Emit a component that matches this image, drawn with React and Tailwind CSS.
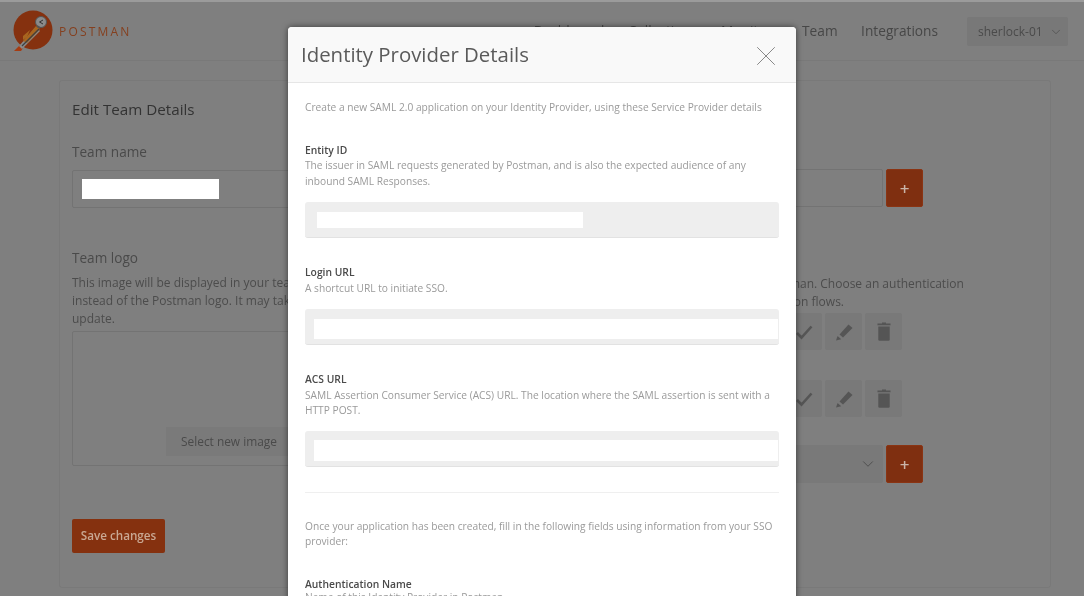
import React from "react";
import { ChevronDown, X } from "lucide-react";

const font = { fontFamily: '"Open Sans", sans-serif' };

function Logo() {
  return (
    <svg width="42" height="44" viewBox="0 0 42 44" className="shrink-0">
      <circle cx="21" cy="20" r="19.5" fill="#85310f" />
      <path d="M2 41 L8 35 L11 38 L9 41 Z" fill="#a63c12" />
      <path d="M7 36 L24 17 L28 21 L10 39 Z" fill="#8a8a8a" />
      <path d="M11 31 L24 16 L28 19 L15 33 Z" fill="#a8651f" />
      <path d="M11 26 L18 20 L15 27 L11 30 Z" fill="#a8651f" />
      <path d="M10 36 L27 19" stroke="#3f3f3f" strokeWidth="1.2" />
      <circle cx="29" cy="12" r="5.5" fill="#8b8b8b" stroke="#555" strokeWidth="1" />
      <path d="M31 10 L27.5 12 L31 14" stroke="#333" strokeWidth="1" fill="none" />
      <path d="M25 16 L28 18" stroke="#555" strokeWidth="2" />
    </svg>
  );
}

function IconBtn({ children }) {
  return (
    <div className="w-[37px] h-[37px] rounded-[2px] bg-[#797979] flex items-center justify-center text-[#555555]">
      {children}
    </div>
  );
}

function CheckIcon() {
  return (
    <svg width="20" height="20" viewBox="0 0 20 20" fill="none">
      <path d="M3 11 L7.5 15.5 L17.5 4.5" stroke="currentColor" strokeWidth="2.6" />
    </svg>
  );
}

function PencilIcon() {
  return (
    <svg width="20" height="20" viewBox="0 0 20 20" fill="currentColor">
      <path d="M5.5 12.5 L14.5 2.5 L18.5 6 L9 15.5 Z" />
      <path d="M2 18.5 L3.6 14 L7.2 17.2 Z" />
    </svg>
  );
}

function TrashIcon() {
  return (
    <svg width="14" height="19" viewBox="0 0 14 19" fill="currentColor">
      <path d="M5 0.5 H9 V1.6 H13.5 V3.2 H0.5 V1.6 H5 Z" />
      <path d="M1.3 4.6 H12.7 V17.5 Q12.7 18.7 11.5 18.7 H2.5 Q1.3 18.7 1.3 17.5 Z" />
    </svg>
  );
}

function Actions({ className }) {
  return (
    <div className={"flex justify-end gap-[3px] w-[370px] " + className}>
      <IconBtn><CheckIcon /></IconBtn>
      <IconBtn><PencilIcon /></IconBtn>
      <IconBtn><TrashIcon /></IconBtn>
    </div>
  );
}

function Plus() {
  return (
    <div className="w-[37px] h-[38px] rounded-[2px] bg-[#7f2f10] border border-[#8a3413] flex items-center justify-center text-[#c9b4a8] text-[17px] font-semibold leading-none">
      +
    </div>
  );
}

function Field({ label, children, className }) {
  return (
    <div className={className}>
      <div className="text-[10.3px] leading-[15.5px] font-semibold text-[#4a4a4a] blur-[0.3px]">{label}</div>
      {children}
    </div>
  );
}

function Help({ children }) {
  return <p className="text-[10.2px] leading-[15.5px] text-[#9a9a9a] whitespace-nowrap blur-[0.3px]">{children}</p>;
}

function Box({ children, className }) {
  return (
    <div className={"h-[36px] rounded-[3px] bg-[#eeeeee] border-b border-[#e2e2e2] flex " + className}>
      {children}
    </div>
  );
}

export default function App() {
  return (
    <div style={font} className="relative h-[596px] w-[1084px] overflow-hidden bg-[#7f7f7f] text-[#474747]">
      <div className="h-[2px] bg-[#9b9b9b]" />
      <header className="h-[59px] border-b border-[#797979] flex items-center pl-[12px] pr-[16px] blur-[0.4px]">
        <div className="flex items-center mt-[1px]">
          <Logo />
          <span className="ml-[5px] text-[#85401f] text-[12px] tracking-[2.2px] leading-none">POSTMAN</span>
        </div>
        <nav className="ml-auto flex items-center gap-[23.5px] text-[13.7px] text-[#474747]">
          <span>Dashboard</span>
          <span>Collections</span>
          <span>Monitors</span>
          <span>Team</span>
          <span>Integrations</span>
        </nav>
        <div className="ml-[29px] w-[101px] h-[29px] rounded-[2px] bg-[#787878] flex items-center pl-[11px] pt-[2px] gap-[6px] text-[12px] text-[#4a4a4a]">
          sherlock-01
          <ChevronDown size={14} strokeWidth={1.2} />
        </div>
      </header>

      <main className="ml-[59px] mr-[33px] mt-[19px] h-[508px] rounded-[3px] border border-[#797979] bg-[#7f7f7f] px-[12px] pt-[17px] flex blur-[0.4px]">
        <section className="w-[450px] shrink-0">
          <h2 className="text-[15.2px] leading-[22px] text-[#333]">Edit Team Details</h2>
          <div className="mt-[22px] text-[13.6px] leading-[20px] text-[#4a4a4a]">Team name</div>
          <div className="mt-[8px] h-[38px] rounded-[2px] border border-[#737373] flex items-center pl-[9px]">
            <div className="w-[137px] h-[20px] bg-white" />
          </div>
          <div className="mt-[40px] text-[13.6px] leading-[20px] text-[#4a4a4a]">Team logo</div>
          <p className="mt-[6px] text-[12px] leading-[18px] text-[#4c4c4c]">
            This image will be displayed in your team's dashboard
            <br />
            instead of the Postman logo. It may take a few minutes to
            <br />
            update.
          </p>
          <div className="mt-[3px] h-[135px] rounded-[2px] border border-[#737373] flex items-end pl-[93px] pb-[9px]">
            <div className="w-[126px] h-[29px] bg-[#7a7a7a] pl-[15px] flex items-center text-[11.9px] text-[#4a4a4a]">
              Select new image
            </div>
          </div>
          <button className="mt-[53px] w-[93px] h-[34px] rounded-[2px] bg-[#85310f] text-[11.7px] font-semibold text-[#c9a893]">
            Save changes
          </button>
        </section>

        <section className="ml-[10px] flex-1">
          <div className="h-[52px]" />
          <div className="mt-[19px] flex gap-[3px]">
            <div className="w-[351px] h-[38px] rounded-[2px] border border-[#737373]" />
            <Plus />
          </div>
          <p className="mt-[68px] ml-[24px] text-[12px] leading-[18px] text-[#4c4c4c] whitespace-nowrap">
            Single sign-on for your team through Postman. Choose an authentication
            <br />
            method and set up the team's authentication flows.
          </p>
          <Actions className="mt-[2px]" />
          <Actions className="mt-[30px]" />
          <div className="mt-[28px] flex gap-[3px]">
            <div className="w-[351px] h-[38px] rounded-[2px] bg-[#797979] flex items-center justify-end pr-[6px] text-[#474747]">
              <ChevronDown size={18} strokeWidth={1.1} />
            </div>
            <Plus />
          </div>
        </section>
      </main>

      {/* modal over the dimmed page */}
      <div className="absolute left-[288px] top-[27px] w-[508px] h-[640px] rounded-t-[4px] bg-white shadow-[0_0_6px_rgba(0,0,0,0.55)]">
        <div className="h-[56px] rounded-t-[4px] bg-[#f9f9f9] border-b border-[#e6e6e6] flex items-center justify-between pl-[13px] pr-[13px]">
          <h1 className="text-[20.4px] text-[#5a5a5a] blur-[0.3px]">Identity Provider Details</h1>
          <X size={34} strokeWidth={0.7} className="text-[#888888] mt-[3px]" />
        </div>
        <div className="px-[17px] pt-[17px]">
          <Help>Create a new SAML 2.0 application on your Identity Provider, using these Service Provider details</Help>
          <Field label="Entity ID" className="mt-[27px]">
            <Help>
              The issuer in SAML requests generated by Postman, and is also the expected audience of any
              <br />
              inbound SAML Responses.
            </Help>
            <Box className="mt-[13px] items-center pl-[12px]">
              <div className="w-[266px] h-[16px] bg-white" />
            </Box>
          </Field>
          <Field label="Login URL" className="mt-[27px]">
            <Help>A shortcut URL to initiate SSO.</Help>
            <Box className="mt-[13px] items-center pl-[9px] pr-[1px]">
              <div className="flex-1 h-[20px] mt-[4px] bg-white" />
            </Box>
          </Field>
          <Field label="ACS URL" className="mt-[27px]">
            <Help>
              SAML Assertion Consumer Service (ACS) URL. The location where the SAML assertion is sent with a
              <br />
              HTTP POST.
            </Help>
            <Box className="mt-[12px] items-center pl-[9px] pr-[1px]">
              <div className="flex-1 h-[21px] mt-[5px] bg-white" />
            </Box>
          </Field>
          <hr className="mt-[25px] border-[#efefef]" />
          <div className="mt-[26px]">
            <Help>
              Once your application has been created, fill in the following fields using information from your SSO
              <br />
              provider:
            </Help>
          </div>
          <Field label="Authentication Name" className="mt-[27px]">
            <div className="-mt-[2px]">
              <Help>Name of this Identity Provider in Postman</Help>
            </div>
          </Field>
        </div>
      </div>
    </div>
  );
}
